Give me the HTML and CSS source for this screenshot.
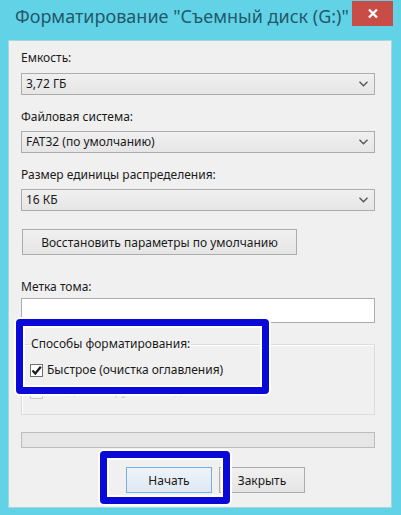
FILE: index.html
```html
<!DOCTYPE html>
<html lang="ru">
<head>
    <meta charset="UTF-8">
    <title>Форматирование</title>
    <link rel="stylesheet" href="styles.css">
</head>
<body>
    <div class="window">
        <div class="titlebar">
            <span class="title">Форматирование "Съемный диск (G:)"</span>
            <div class="close">
                <svg width="12" height="11" viewBox="0 0 12 11">
                    <path d="M2 1.5 L10 9.5 M10 1.5 L2 9.5" stroke="#fff" stroke-width="2.4" fill="none"/>
                </svg>
            </div>
        </div>

        <div class="content">
            <label class="lbl first">Емкость:</label>
            <div class="select">3,72 ГБ<svg class="chev" width="9" height="6" viewBox="0 0 9 6"><path d="M0.5 0.8 L4.5 4.8 L8.5 0.8" stroke="#555" stroke-width="1.4" fill="none"/></svg></div>

            <label class="lbl">Файловая система:</label>
            <div class="select">FAT32 (по умолчанию)<svg class="chev" width="9" height="6" viewBox="0 0 9 6"><path d="M0.5 0.8 L4.5 4.8 L8.5 0.8" stroke="#555" stroke-width="1.4" fill="none"/></svg></div>

            <label class="lbl">Размер единицы распределения:</label>
            <div class="select">16 КБ<svg class="chev" width="9" height="6" viewBox="0 0 9 6"><path d="M0.5 0.8 L4.5 4.8 L8.5 0.8" stroke="#555" stroke-width="1.4" fill="none"/></svg></div>

            <button class="btn restore">Восстановить параметры по умолчанию</button>

            <label class="lbl volume">Метка тома:</label>
            <div class="textbox"></div>

            <fieldset class="group">
                <legend>Способы форматирования:</legend>
                <div class="check-row">
                    <span class="checkbox checked">
                        <svg width="11" height="11" viewBox="0 0 11 11"><path d="M1.5 5.5 L4.3 8.5 L9.8 1.8" stroke="#1a1a1a" stroke-width="2.2" fill="none"/></svg>
                    </span>
                    Быстрое (очистка оглавления)
                </div>
                <div class="check-row disabled">
                    <span class="checkbox"></span>
                    <span>Создать загрузочный диск MS-DOS</span>
                </div>
            </fieldset>

            <div class="progress"></div>

            <div class="actions">
                <button class="btn default">Начать</button>
                <button class="btn">Закрыть</button>
            </div>
        </div>

        <!-- выделение поверх окна -->
        <div class="mark mark-quick"></div>
        <div class="mark mark-start"></div>
    </div>
</body>
</html>
```

FILE: styles.css
```css
body {
    margin: 0;
    background: #62d3e7;
    font-family: "Noto Sans", "Open Sans", sans-serif;
    font-size: 12px;
    color: #1a1a1a;
}
.window {
    position: relative;
    width: 401px;
    height: 515px;
    box-sizing: border-box;
    padding: 0 9px 7px 8px;
    display: flex;
    flex-direction: column;
}
.titlebar {
    height: 40px;
    display: flex;
    justify-content: space-between;
    align-items: flex-start;
    margin-right: -1px;
}
.title {
    font-size: 18px;
    line-height: 26px;
    margin: 3px 0 0 7px;
    color: #22596a;
    white-space: nowrap;
}
.close {
    flex-shrink: 0;
    width: 41px;
    height: 25px;
    margin-top: 1px;
    background: #c94d47;
    display: flex;
    align-items: center;
    justify-content: center;
}
.content {
    flex: 1;
    background: #f0f0f0;
    border: 1px solid #a6d6e0;
    padding: 0 16px 0 12px;
    display: flex;
    flex-direction: column;
}
.lbl {
    display: block;
    line-height: 16px;
    margin: 14px 0 6px;
}
.lbl.first { margin-top: 9px; margin-bottom: 7px; }
.lbl.volume { margin-top: 24px; margin-bottom: 3px; }
.select {
    height: 22px;
    box-sizing: border-box;
    border: 1px solid #acacac;
    background: linear-gradient(#f0f0f0, #e6e6e6);
    padding-left: 4px;
    line-height: 20px;
    display: flex;
    justify-content: space-between;
    align-items: center;
}
.chev { margin-right: 6px; }
.btn {
    height: 26px;
    box-sizing: border-box;
    border: 1px solid #acacac;
    background: linear-gradient(#f0f0f0, #e5e5e5);
    font-family: inherit;
    font-size: 12px;
    color: #1a1a1a;
    padding: 0;
}
.restore {
    width: 275px;
    margin: 18px 0 0 1px;
}
.textbox {
    height: 25px;
    box-sizing: border-box;
    border: 1px solid #abadb3;
    background: #fff;
}
.group {
    margin: 13px 0 0;
    padding: 0 8px 14px;
    border: 1px solid #dcdcdc;
    box-shadow: inset 1px 1px 0 #fff;
    min-width: 0;
    height: 79px;
    box-sizing: border-box;
}
.group legend {
    padding: 0 1px;
    line-height: 16px;
}
.check-row {
    display: flex;
    align-items: center;
    gap: 4px;
    line-height: 16px;
    margin-top: 10px;
}
.check-row.disabled {
    align-items: flex-start;
    margin-top: 5px;
    color: #cfcfcf;
}
.checkbox {
    width: 13px;
    height: 13px;
    box-sizing: border-box;
    border: 1px solid #707070;
    background: #fff;
    display: flex;
    align-items: center;
    justify-content: center;
}
.disabled .checkbox {
    margin-top: 3px;
    border-color: #c8c8c8;
    background: #f4f4f4;
}
.progress {
    height: 16px;
    margin-top: 17px;
    box-sizing: border-box;
    border: 1px solid #bcbcbc;
    background: #e6e6e6;
}
.actions {
    display: flex;
    gap: 7px;
    margin-top: 19px;
    padding-left: 105px;
}
.actions .btn { width: 86px; }
.btn.default {
    border-color: #79aee2;
    background: linear-gradient(#edf3f9, #dfe9f3);
}
.mark {
    position: absolute;
    border: 7px solid #0a0ad8;
    border-radius: 4px;
    box-shadow: 0 0 0 2px #fff, inset 0 0 0 2px #fff;
}
.mark-quick {
    left: 16px;
    top: 319px;
    width: 239px;
    height: 61px;
}
.mark-start {
    left: 100px;
    top: 451px;
    width: 116px;
    height: 39px;
}
```
